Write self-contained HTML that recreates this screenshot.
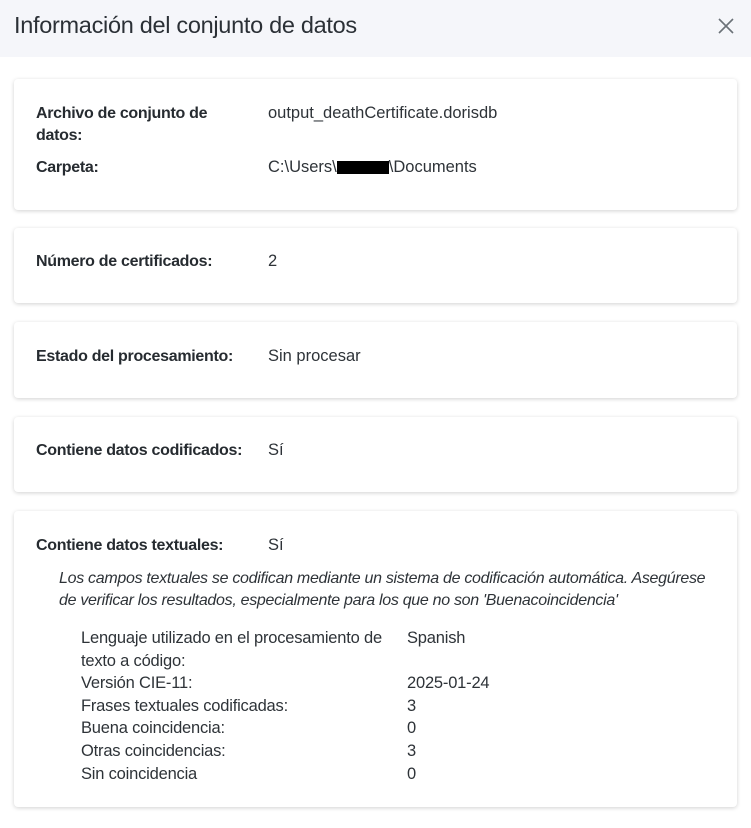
<!DOCTYPE html>
<html><head><meta charset="utf-8"><style>
*{margin:0;padding:0;box-sizing:border-box}
body{width:751px;height:828px;background:#fff;font-family:"Liberation Sans",sans-serif;color:#2e3338;position:relative;overflow:hidden}
.hdr{position:absolute;left:0;top:0;width:751px;height:57px;background:#f5f6fa}
.hdr h1{position:absolute;left:14px;top:12px;font-size:23.5px;font-weight:normal;color:#2b3036;letter-spacing:-0.3px}
.x{position:absolute;left:717px;top:17px;width:18px;height:18px}
.card{position:absolute;left:14px;width:723px;background:#fff;border-radius:4px;box-shadow:0 1px 4px rgba(0,0,0,0.18)}
.row{position:absolute;font-size:16.5px;line-height:22px}
.lab{left:22px;font-weight:bold;font-size:16px;width:210px;letter-spacing:-0.3px;color:#262b30;top:1px}
.val{left:254px}
.it{position:absolute;left:45px;top:57px;font-style:italic;font-size:16px;line-height:22px;letter-spacing:-0.3px;white-space:nowrap}
.t{position:absolute;font-size:16.5px;line-height:22.6px;white-space:nowrap;letter-spacing:-0.2px}
</style></head><body>
<div class="hdr"><h1>Información del conjunto de datos</h1>
<svg class="x" viewBox="0 0 18 18"><path d="M2 2L16 16M16 2L2 16" stroke="#6b7178" stroke-width="1.6"/></svg></div>

<div class="card" style="top:79px;height:131px">
<div class="row lab" style="top:24px">Archivo de conjunto de datos:</div>
<div class="row val" style="top:23px">output_deathCertificate.dorisdb</div>
<div class="row lab" style="top:78px">Carpeta:</div>
<div class="row val" style="top:77px">C:\Users\<span style="display:inline-block;width:52px;height:13px;background:#000;vertical-align:-2px"></span>\Documents</div>
</div>

<div class="card" style="top:228px;height:75px">
<div class="row lab" style="top:23px">Número de certificados:</div>
<div class="row val" style="top:22px">2</div></div>

<div class="card" style="top:322px;height:76px">
<div class="row lab" style="top:24px;width:240px">Estado del procesamiento:</div>
<div class="row val" style="top:23px">Sin procesar</div></div>

<div class="card" style="top:417px;height:75px">
<div class="row lab" style="top:23px;width:240px">Contiene datos codificados:</div>
<div class="row val" style="top:22px">Sí</div></div>

<div class="card" style="top:511px;height:296px">
<div class="row lab" style="top:24px;width:240px">Contiene datos textuales:</div>
<div class="row val" style="top:23px">Sí</div>
<div class="it">Los campos textuales se codifican mediante un sistema de codificación automática. Asegúrese<br>de verificar los resultados, especialmente para los que no son 'Buenacoincidencia'</div>
<div class="t" style="left:67px;top:116px">Lenguaje utilizado en el procesamiento de<br>texto a código:<br>Versión CIE-11:<br>Frases textuales codificadas:<br>Buena coincidencia:<br>Otras coincidencias:<br>Sin coincidencia</div>
<div class="t" style="left:393px;top:116px">Spanish<br>&nbsp;<br>2025-01-24<br>3<br>0<br>3<br>0</div>
</div>
</body></html>
